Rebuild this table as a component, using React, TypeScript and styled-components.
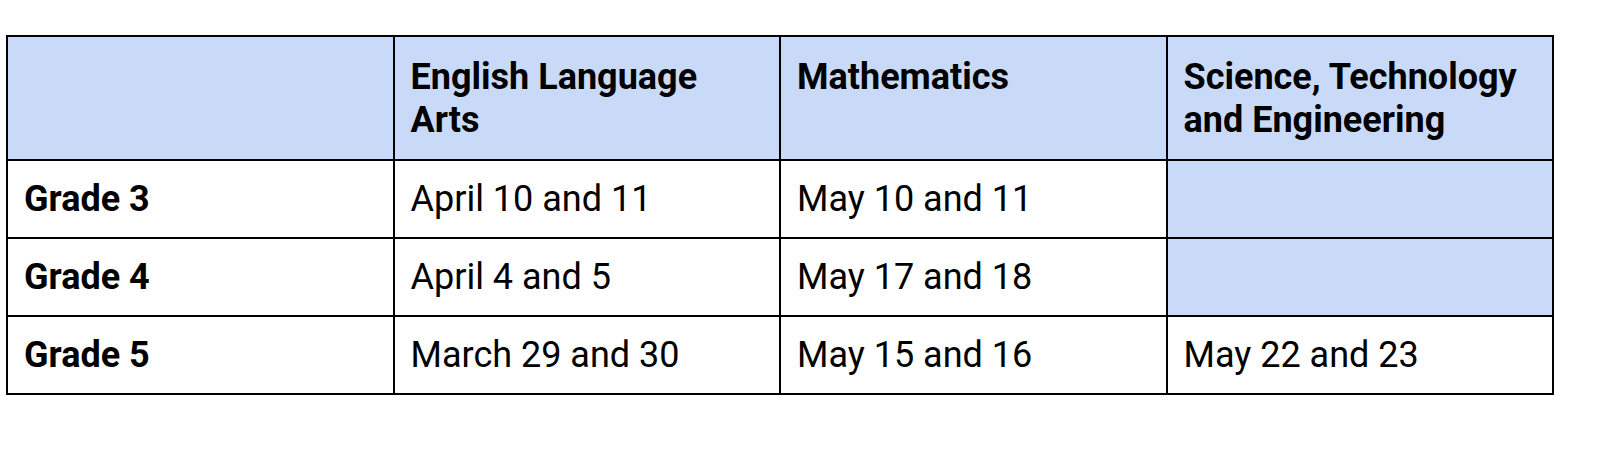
import styled, { createGlobalStyle } from 'styled-components'

const GlobalStyle = createGlobalStyle`
  html, body {
    margin: 0;
    padding: 0;
    background: #ffffff;
  }
  body {
    font-family: Roboto, "Noto Sans", sans-serif;
    color: #000000;
  }
`

const Page = styled.div`
  padding: 35px 0 0 6px;
`

const Table = styled.table`
  width: 1548px;
  border-collapse: collapse;
  table-layout: fixed;
`

const Cell = styled.td<{ $head?: boolean; $bold?: boolean; $shaded?: boolean }>`
  border: 2px solid #000000;
  background: ${({ $shaded }) => ($shaded ? '#c9daf8' : '#ffffff')};
  font-size: 36px;
  line-height: 43px;
  font-weight: ${({ $bold }) => ($bold ? 700 : 400)};
  padding: ${({ $head }) => ($head ? '19px 16px 16px' : '17px 16px 16px')};
  vertical-align: ${({ $head }) => ($head ? 'top' : 'middle')};
  height: ${({ $head }) => ($head ? '87px' : '43px')};
  box-sizing: content-box;
  color: #000000;
`

const headers = ['', 'English Language Arts', 'Mathematics', 'Science, Technology and Engineering']

const rows = [
  { grade: 'Grade 3', ela: 'April 10 and 11', math: 'May 10 and 11', ste: '' },
  { grade: 'Grade 4', ela: 'April 4 and 5', math: 'May 17 and 18', ste: '' },
  { grade: 'Grade 5', ela: 'March 29 and 30', math: 'May 15 and 16', ste: 'May 22 and 23' },
]

export default function App() {
  return (
    <>
      <GlobalStyle />
      <Page>
        <Table>
          <tbody>
            <tr>
              {headers.map((h, i) => (
                <Cell key={i} $head $bold $shaded>
                  {h}
                </Cell>
              ))}
            </tr>
            {rows.map((r) => (
              <tr key={r.grade}>
                <Cell $bold>{r.grade}</Cell>
                <Cell>{r.ela}</Cell>
                <Cell>{r.math}</Cell>
                <Cell $shaded={!r.ste}>{r.ste}</Cell>
              </tr>
            ))}
          </tbody>
        </Table>
      </Page>
    </>
  )
}
